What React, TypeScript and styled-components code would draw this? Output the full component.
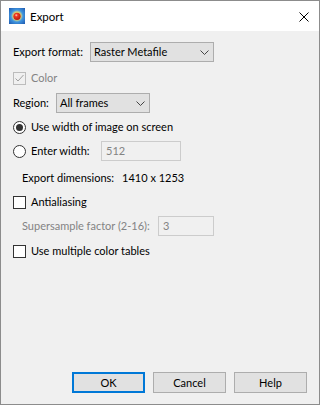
import React from "react";
import styled, { createGlobalStyle } from "styled-components";

const GlobalStyle = createGlobalStyle`
  html, body {
    margin: 0;
    padding: 0;
    background: #ffffff;
  }
  body {
    font-family: Lato, "Noto Sans", Arial, sans-serif;
    font-size: 11px;
    color: #000000;
  }
`;

const Window = styled.div`
  box-sizing: border-box;
  width: 320px;
  height: 405px;
  border: 1px solid #8c8c8c;
  background: #f0f0f0;
  display: flex;
  flex-direction: column;
`;

const TitleBar = styled.div`
  height: 30px;
  background: #ffffff;
  display: flex;
  align-items: center;
  padding-left: 8px;
  padding-right: 10px;
`;

const Title = styled.span`
  margin-left: 5px;
  font-size: 11.5px;
  line-height: 14px;
  margin-top: 1px;
`;

const Close = styled.div`
  margin-left: auto;
  width: 10px;
  height: 10px;
  margin-top: 1px;
  display: flex;
`;

const Body = styled.div`
  flex: 1;
  display: flex;
  flex-direction: column;
  padding: 0 12px;
`;

const Row = styled.div<{ $mt: number; $h?: number; $indent?: number; $gap?: number }>`
  display: flex;
  align-items: center;
  margin-top: ${(p) => p.$mt}px;
  height: ${(p) => p.$h ?? 14}px;
  padding-left: ${(p) => p.$indent ?? 0}px;
  gap: ${(p) => p.$gap ?? 5}px;
`;

const Label = styled.span<{ $disabled?: boolean; $w?: number }>`
  color: ${(p) => (p.$disabled ? "#838383" : "#000000")};
  white-space: nowrap;
  line-height: 14px;
  ${(p) => (p.$w ? `width: ${p.$w}px; flex: none;` : "")}
`;

const Select = styled.div<{ $w: number }>`
  box-sizing: border-box;
  width: ${(p) => p.$w}px;
  height: 20px;
  background: #e1e1e1;
  border: 1px solid #adadad;
  display: flex;
  align-items: center;
  padding: 0 4px 0 3px;
  line-height: 14px;
  justify-content: space-between;
`;

const Input = styled.div<{ $w: number }>`
  box-sizing: border-box;
  width: ${(p) => p.$w}px;
  height: 20px;
  background: #f0f0f0;
  border: 1px solid #cccccc;
  color: #838383;
  display: flex;
  align-items: center;
  padding-left: 4px;
  line-height: 14px;
`;

const Box = styled.div<{ $disabled?: boolean }>`
  box-sizing: border-box;
  width: 13px;
  height: 13px;
  flex: none;
  border: 1px solid ${(p) => (p.$disabled ? "#bcbcbc" : "#333333")};
  background: ${(p) => (p.$disabled ? "#f0f0f0" : "#ffffff")};
  display: flex;
  align-items: center;
  justify-content: center;
`;

const Radio = styled.div<{ $on?: boolean }>`
  box-sizing: border-box;
  width: 13px;
  height: 13px;
  flex: none;
  border-radius: 50%;
  border: 1px solid #333333;
  background: #ffffff;
  display: flex;
  align-items: center;
  justify-content: center;
  &::after {
    content: "";
    display: ${(p) => (p.$on ? "block" : "none")};
    width: 7px;
    height: 7px;
    border-radius: 50%;
    background: #333333;
  }
`;

const Footer = styled.div`
  margin-top: auto;
  display: flex;
  justify-content: flex-end;
  gap: 8px;
  padding: 0 12px 11px 0;
`;

const Button = styled.div<{ $default?: boolean }>`
  box-sizing: border-box;
  width: 73px;
  height: 21px;
  background: #e1e1e1;
  border: ${(p) => (p.$default ? "2px solid #0078d7" : "1px solid #adadad")};
  display: flex;
  align-items: center;
  justify-content: center;
  line-height: 14px;
`;

const Chevron = () => (
  <svg width="9" height="5" viewBox="0 0 9 5">
    <path d="M0.5 0.5 L4.5 4.5 L8.5 0.5" fill="none" stroke="#444" strokeWidth="1" />
  </svg>
);

const Check = ({ color }: { color: string }) => (
  <svg width="11" height="11" viewBox="0 0 11 11">
    <path d="M1.5 5.5 L4 8 L9.5 2" fill="none" stroke={color} strokeWidth="1" />
  </svg>
);

// app logo: blue tile with a glowing red ball
const AppIcon = () => (
  <svg width="16" height="16" viewBox="0 0 16 16">
    <defs>
      <radialGradient id="tile" cx="0.5" cy="0.5" r="0.75">
        <stop offset="0" stopColor="#9fe0ff" />
        <stop offset="0.5" stopColor="#3f95e0" />
        <stop offset="1" stopColor="#1a4fa6" />
      </radialGradient>
      <radialGradient id="glow" cx="0.5" cy="0.5" r="0.5">
        <stop offset="0.5" stopColor="#ffd84a" />
        <stop offset="1" stopColor="#ffd84a" stopOpacity="0" />
      </radialGradient>
      <radialGradient id="ball" cx="0.4" cy="0.35" r="0.7">
        <stop offset="0" stopColor="#ffd0c0" />
        <stop offset="0.3" stopColor="#ee3a22" />
        <stop offset="1" stopColor="#b0140c" />
      </radialGradient>
    </defs>
    <rect x="0" y="0" width="16" height="16" fill="url(#tile)" />
    <circle cx="8" cy="8" r="6" fill="url(#glow)" />
    <circle cx="8" cy="8.3" r="3.6" fill="url(#ball)" />
  </svg>
);

const CloseIcon = () => (
  <svg width="10" height="10" viewBox="0 0 10 10">
    <path d="M0.5 0.5 L9.5 9.5 M9.5 0.5 L0.5 9.5" stroke="#000" strokeWidth="1" />
  </svg>
);

const App: React.FC = () => {
  return (
    <>
      <GlobalStyle />
      <Window>
        <TitleBar>
          <AppIcon />
          <Title>Export</Title>
          <Close>
            <CloseIcon />
          </Close>
        </TitleBar>
        <Body>
          <Row $mt={11} $h={20}>
            <Label $w={72}>Export format:</Label>
            <Select $w={124}>
              <span>Raster Metafile</span>
              <Chevron />
            </Select>
          </Row>
          <Row $mt={9}>
            <Box $disabled>
              <Check color="#a0a0a0" />
            </Box>
            <Label $disabled>Color</Label>
          </Row>
          <Row $mt={8} $h={20}>
            <Label $w={38}>Region:</Label>
            <Select $w={94}>
              <span>All frames</span>
              <Chevron />
            </Select>
          </Row>
          <Row $mt={7}>
            <Radio $on />
            <Label>Use width of image on screen</Label>
          </Row>
          <Row $mt={7} $h={20}>
            <Radio />
            <Label $w={65}>Enter width:</Label>
            <Input $w={80}>512</Input>
          </Row>
          <Row $mt={10} $indent={9} $gap={8}>
            <Label>Export dimensions:</Label>
            <Label>1410 x 1253</Label>
          </Row>
          <Row $mt={10}>
            <Box />
            <Label>Antialiasing</Label>
          </Row>
          <Row $mt={7} $h={20} $indent={9}>
            <Label $disabled $w={131}>
              Supersample factor (2-16):
            </Label>
            <Input $w={56}>3</Input>
          </Row>
          <Row $mt={8}>
            <Box />
            <Label>Use multiple color tables</Label>
          </Row>
        </Body>
        <Footer>
          <Button $default>OK</Button>
          <Button>Cancel</Button>
          <Button>Help</Button>
        </Footer>
      </Window>
    </>
  );
};

export default App;
